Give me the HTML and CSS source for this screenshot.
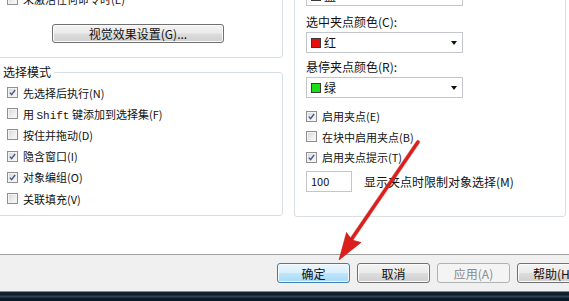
FILE: index.html
```html
<!DOCTYPE html>
<html lang="zh-CN">
<head>
<meta charset="utf-8">
<title>选项</title>
<link rel="stylesheet" href="styles.css">
</head>
<body>
<div class="page">
  <div class="main">
    <div class="col">
      <div class="group g1">
        <div class="row"><span class="cb"></span><span>未激活任何命令时(E)</span></div>
        <div class="btn wide">视觉效果设置(G)...</div>
      </div>
      <div class="group g2">
        <div class="title">选择模式</div>
        <div class="row first"><span class="cb"><svg viewBox="0 0 11 11"><path d="M2.3 5.6 L4.4 8.2 L8.7 2.4"/></svg></span><span>先选择后执行(N)</span></div>
        <div class="row"><span class="cb"></span><span>用 <span class="mono">Shift</span> 键添加到选择集(F)</span></div>
        <div class="row"><span class="cb"></span><span>按住并拖动(D)</span></div>
        <div class="row"><span class="cb"><svg viewBox="0 0 11 11"><path d="M2.3 5.6 L4.4 8.2 L8.7 2.4"/></svg></span><span>隐含窗口(I)</span></div>
        <div class="row"><span class="cb"><svg viewBox="0 0 11 11"><path d="M2.3 5.6 L4.4 8.2 L8.7 2.4"/></svg></span><span>对象编组(O)</span></div>
        <div class="row"><span class="cb"></span><span>关联填充(V)</span></div>
      </div>
    </div>
    <div class="col">
      <div class="group g3">
        <div class="select"><span class="swatch blue"></span><span class="val">蓝</span><span class="caret"></span></div>
        <div class="lbl first">选中夹点颜色(C):</div>
        <div class="select"><span class="swatch red"></span><span class="val">红</span><span class="caret"></span></div>
        <div class="lbl">悬停夹点颜色(R):</div>
        <div class="select"><span class="swatch green"></span><span class="val">绿</span><span class="caret"></span></div>
        <div class="rows">
          <div class="row r2"><span class="cb"><svg viewBox="0 0 11 11"><path d="M2.3 5.6 L4.4 8.2 L8.7 2.4"/></svg></span><span>启用夹点(E)</span></div>
          <div class="row r2"><span class="cb"></span><span>在块中启用夹点(B)</span></div>
          <div class="row r2"><span class="cb"><svg viewBox="0 0 11 11"><path d="M2.3 5.6 L4.4 8.2 L8.7 2.4"/></svg></span><span>启用夹点提示(T)</span></div>
        </div>
        <div class="inrow"><div class="input">100</div><span class="inlbl">显示夹点时限制对象选择(M)</span></div>
      </div>
    </div>
  </div>
  <div class="footer">
    <div class="btn def">确定</div>
    <div class="btn">取消</div>
    <div class="btn dis">应用(A)</div>
    <div class="btn">帮助(H)</div>
  </div>
  <div class="taskbar"></div>
  <svg class="arrow" viewBox="0 0 569 301" width="569" height="301">
    <line x1="418" y1="142" x2="351" y2="240" stroke="#9c1512" stroke-width="4.4" stroke-linecap="round" opacity="0.35"/>
    <line x1="418" y1="142" x2="351" y2="240" stroke="#dd1f1c" stroke-width="3.2" stroke-linecap="round"/>
    <polygon points="339,260 346.5,232.5 352,240 361,242.5" fill="#dd1f1c" stroke="#b51512" stroke-width="0.6"/>
  </svg>
</div>
</body>
</html>
```
FILE: styles.css
```css
html, body {
  margin: 0;
  padding: 0;
  overflow: hidden;
  background: #ffffff;
}
body {
  font-family: "Noto Sans CJK SC", "Noto Sans", sans-serif;
  font-size: 12px;
  color: #111;
}
.page {
  position: relative;
  width: 600px;
  height: 301px;
  overflow: hidden;
}
.main {
  display: grid;
  grid-template-columns: 293px 272px;
  column-gap: 11px;
  margin-left: -10px;
  height: 254px;
  align-items: start;
  background: #fff;
}
.col {
  display: flex;
  flex-direction: column;
}
.group {
  box-sizing: border-box;
  border: 1px solid #d5dfe5;
  border-radius: 3px;
  display: flex;
  flex-direction: column;
  align-items: flex-start;
}
.g1 {
  height: 88px;
  margin-top: -30px;
  padding: 18px 0 0 16px;
}
.g1 .row { height: 20px; }
.g2 {
  margin-top: 14px;
  padding: 0 0 6px 16px;
}
.title {
  margin: -8px 0 0 -8px;
  padding: 0 3px 0 4px;
  line-height: 14px;
  font-size: 12px;
  background: #fff;
}
.row {
  display: flex;
  align-items: center;
  height: 21.2px;
  font-size: 11px;
  white-space: nowrap;
}
.row.first { margin-top: 3px; }
.row.r2 { height: 20.5px; }
.mono {
  font-family: "Liberation Mono", monospace;
  font-size: 11px;
}
.cb {
  box-sizing: border-box;
  width: 11px;
  height: 11px;
  border: 1px solid #8e8f8f;
  background: linear-gradient(135deg, #d6d6d6 0%, #eeeeee 60%, #fbfbfb 100%);
  box-shadow: inset 0 0 0 1px #f4f4f4;
  margin-right: 5px;
  flex: none;
  display: flex;
}
.cb svg {
  width: 9px;
  height: 9px;
}
.cb path {
  fill: none;
  stroke: #3f5b8f;
  stroke-width: 1.7;
}
.btn {
  box-sizing: border-box;
  height: 20px;
  width: 73px;
  border: 1px solid #707070;
  border-radius: 3px;
  background: linear-gradient(#f3f3f3 0%, #ebebeb 48%, #dddddd 52%, #cfcfcf 100%);
  box-shadow: inset 0 0 0 1px #fbfbfb;
  display: flex;
  align-items: center;
  justify-content: center;
  font-size: 12px;
  white-space: nowrap;
  flex: none;
}
.btn.wide {
  width: 172px;
  height: 19px;
  margin: 15px 0 0 45px;
}
.btn.def {
  border-color: #3c7fb1;
  background: linear-gradient(#eaf6fd 0%, #d9f0fc 48%, #bee6fd 52%, #a7d9f5 100%);
  box-shadow: inset 0 0 0 1px #f4fbfe;
}
.btn.dis {
  border-color: #adb2b5;
  background: #f4f4f4;
  box-shadow: none;
  color: #8a8a8a;
}
.g3 {
  margin-top: -20px;
  padding: 4px 0 24px 11px;
  border-color: #dadfe3;
}
.select {
  box-sizing: border-box;
  width: 157px;
  height: 21px;
  border: 1px solid #c3c6cb;
  background: #fff;
  display: flex;
  align-items: center;
  padding: 0 5px 0 4px;
  font-size: 12px;
}
.swatch {
  box-sizing: border-box;
  width: 10px;
  height: 10px;
  border: 1px solid #3a3a3a;
  flex: none;
}
.swatch.red { background: #e80f0f; }
.swatch.green { background: #17e017; }
.swatch.blue { background: #1f3fe0; }
.val { margin-left: 3px; }
.caret {
  margin-left: auto;
  width: 0;
  height: 0;
  border-left: 3.5px solid transparent;
  border-right: 3.5px solid transparent;
  border-top: 4px solid #111;
}
.lbl {
  line-height: 14px;
  font-size: 12px;
  margin: 7px 0 3px;
}
.lbl.first { margin-top: 9px; }
.rows {
  margin-top: 8px;
  display: flex;
  flex-direction: column;
}
.inrow {
  margin-top: 3.5px;
  display: flex;
  align-items: center;
}
.input {
  box-sizing: border-box;
  width: 46px;
  height: 21px;
  border: 1px solid #c3c6cb;
  padding: 2px 0 0 4px;
  font-size: 11px;
  line-height: 15px;
}
.inlbl {
  margin-left: 12px;
  font-size: 12px;
}
.footer {
  box-sizing: border-box;
  height: 37px;
  border-top: 1px solid #a0a0a0;
  background: #f0f0f0;
  display: flex;
  align-items: flex-start;
  gap: 7px;
  padding: 8px 0 0 277px;
}
.taskbar {
  height: 10px;
  background: linear-gradient(#6f8aa2 0px, #6f8aa2 1px, #142434 1px, #0e1c29 4px, #2c4256 5px, #2c4256 6px, #0c1823 7px, #0c1823 10px);
}
.arrow {
  position: absolute;
  left: 0;
  top: 0;
  pointer-events: none;
}
```
